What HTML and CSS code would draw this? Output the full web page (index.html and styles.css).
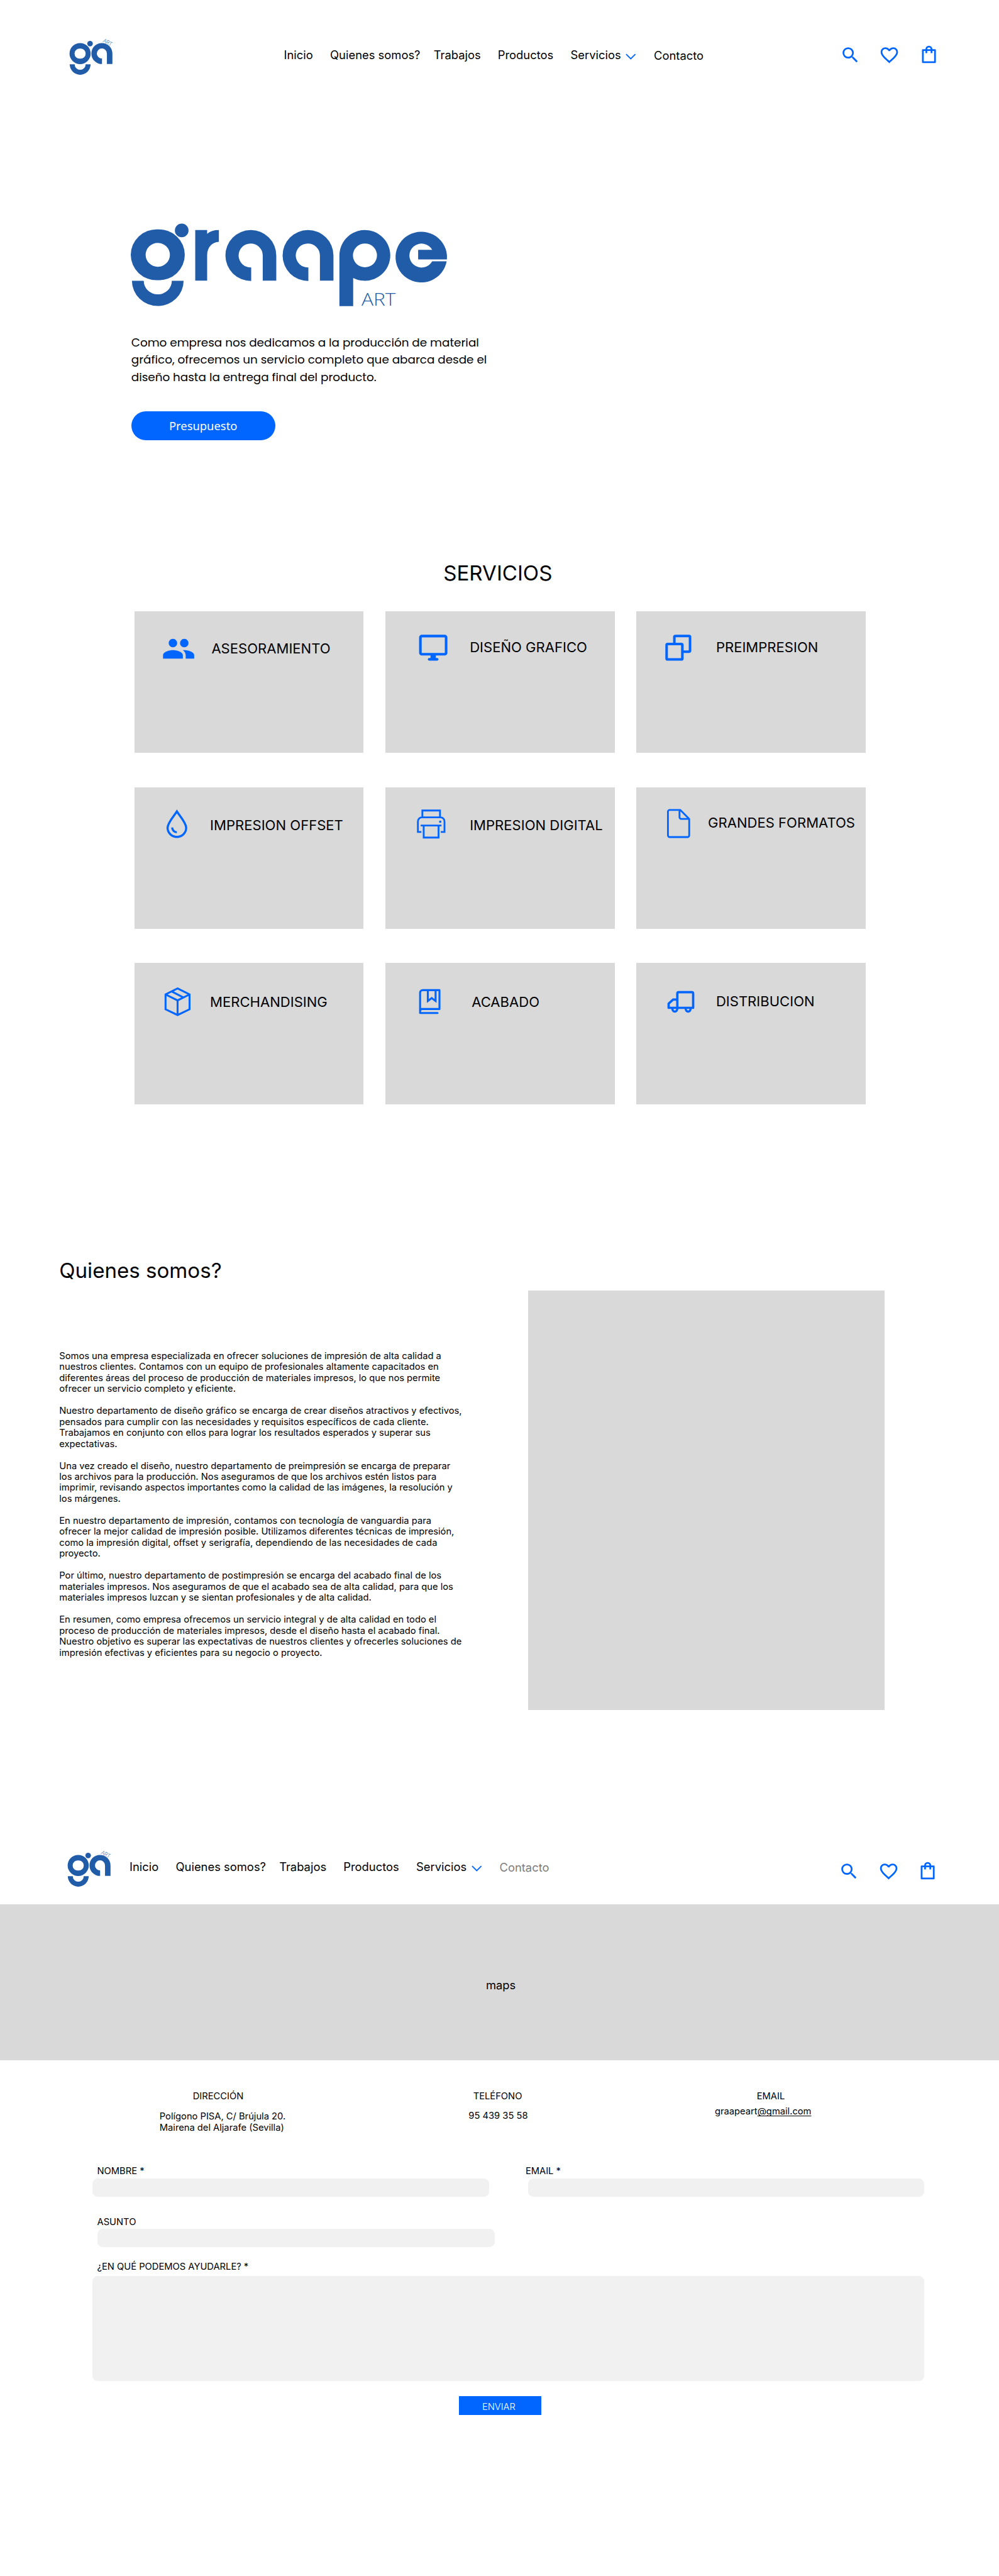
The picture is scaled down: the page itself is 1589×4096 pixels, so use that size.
FILE: index.html
```html
<!DOCTYPE html>
<html lang="es">
<head>
<meta charset="utf-8">
<title>Graape Art</title>
<link rel="stylesheet" href="styles.css">
</head>
<body>
<svg width="0" height="0" class="sprite" aria-hidden="true">
  <symbol id="logo" viewBox="118 62 80 70">
    <g fill="#215ca9">
      <path fill-rule="evenodd" d="M138 74.4a18.2 18.2 0 1 0 0 36.5a18.2 18.2 0 1 0 0-36.5zM138 84a8.7 8.7 0 1 1 0 17.3a8.7 8.7 0 1 1 0-17.3z"/>
      <circle cx="155.2" cy="75.4" r="4.8"/>
      <path d="M120 111.2H128.6A9.5 9.5 0 0 0 147.6 111.2H156.2A18.1 18.1 0 0 1 120 111.2Z"/>
      <path d="M175.9 101.2A8.7 8.7 0 1 1 184.4 92.6V110.8H193.9V92.6A18.2 18.2 0 1 0 175.9 110.8Z"/>
      <text transform="translate(176.6 72.6) rotate(27)" class="logo-art" font-size="10" textLength="16.5">ART</text>
    </g>
  </symbol>
  <symbol id="search" viewBox="0 0 24 24"><path d="M15.5 14h-.79l-.28-.27A6.47 6.47 0 0 0 16 9.5 6.5 6.5 0 1 0 9.5 16c1.61 0 3.09-.59 4.23-1.57l.27.28v.79l5 4.99L20.49 19l-4.99-5zm-6 0C7.01 14 5 11.99 5 9.5S7.01 5 9.5 5 14 7.01 14 9.5 11.99 14 9.5 14z"/></symbol>
  <symbol id="heart" viewBox="0 0 24 24"><path d="M16.5 3c-1.74 0-3.41.81-4.5 2.09C10.91 3.81 9.24 3 7.5 3 4.42 3 2 5.42 2 8.5c0 3.78 3.4 6.86 8.55 11.54L12 21.35l1.45-1.32C18.6 15.36 22 12.28 22 8.5 22 5.42 19.58 3 16.5 3zm-4.4 15.55l-.1.1-.1-.1C7.14 14.24 4 11.39 4 8.5 4 6.5 5.5 5 7.5 5c1.54 0 3.04.99 3.57 2.36h1.87C13.46 5.99 14.96 5 16.5 5c2 0 3.5 1.5 3.5 3.5 0 2.89-3.14 5.74-7.9 10.05z"/></symbol>
  <symbol id="bag" viewBox="0 0 24 24"><path fill="none" stroke="currentColor" stroke-width="2" stroke-linejoin="round" d="M5 6.2H19V20.3H5ZM9 9.8V5.2a3 3 0 0 1 6 0V9.8"/></symbol>
</svg>

<header class="header">
  <svg class="logo"><use href="#logo"/></svg>
  <nav class="nav">
    <a>Inicio</a><a>Quienes somos?</a><a>Trabajos</a><a>Productos</a>
    <a class="with-arrow">Servicios <svg class="arrow" viewBox="0 0 18 11"><path d="M1 1.2L9 9.2L17 1.2"/></svg></a>
    <a class="low">Contacto</a>
  </nav>
  <div class="actions">
    <svg><use href="#search"/></svg><svg><use href="#heart"/></svg><svg><use href="#bag"/></svg>
  </div>
</header>

<section class="hero">
  <svg class="wordmark" viewBox="227 386 548 145">
    <g fill="#215ca9">
      <path fill-rule="evenodd" d="M272.6 396.7a44.6 43.9 0 1 0 0 87.7a44.6 43.9 0 1 0 0-87.7zM272.6 420a21 20.6 0 1 1 0 41.2a21 20.6 0 1 1 0-41.2z"/>
      <circle cx="314" cy="398.4" r="12.6" stroke="#fff" stroke-width="1.6"/>
      <path d="M227.9 485.4H248.3A24.3 23.6 0 0 0 296.9 485.4H317.3A44.7 43.7 0 0 1 227.9 485.4Z"/>
      <path d="M337.4 397.8H358V404.2C363.5 399.8 370 397.7 378.3 397.8V418C367 418.5 358 427.5 358 441V485.2H337.4Z"/>
      <path id="letter-a" d="M434.2 462.4A20.9 20.7 0 1 1 454.2 441.7V485.2H477.6V441.7A44 44 0 1 0 434.2 485.7Z"/>
      <use href="#letter-a" x="98.9"/>
      <path fill-rule="evenodd" d="M586.8 441.5A44 43.8 0 1 1 610.6 480.5V529.3H586.8ZM631 421a20.8 20.6 0 1 0 0 41.2a20.8 20.6 0 1 0 0-41.2z"/>
      <path d="M772.8 448.4H723V432H747.3A21 20.7 0 1 0 747.3 451.7H772.3A44.5 43.8 0 1 1 772.8 441.5Z"/>
      <text x="625" y="529" class="logo-art" font-size="30.4" textLength="59" lengthAdjust="spacingAndGlyphs">ART</text>
    </g>
  </svg>
  <p class="lead">Como empresa nos dedicamos a la producción de material<br>gráfico, ofrecemos un servicio completo que abarca desde el<br>diseño hasta la entrega final del producto.</p>
  <a class="cta">Presupuesto</a>
</section>

<section class="services">
  <h2>SERVICIOS</h2>
  <div class="cards">
    <article class="card">
      <svg class="icon solid" viewBox="273 1087 80 60"><path transform="translate(279.6 1091.9) scale(2.45)" d="M16 11c1.66 0 2.99-1.34 2.99-3S17.66 5 16 5c-1.66 0-3 1.34-3 3s1.34 3 3 3zm-8 0c1.66 0 2.99-1.34 2.99-3S9.66 5 8 5C6.34 5 5 6.34 5 8s1.34 3 3 3zm0 2c-2.33 0-7 1.17-7 3.5V19h14v-2.5c0-2.33-4.67-3.5-7-3.5zm8 0c-.29 0-.62.02-.97.05 1.16.84 1.97 1.97 1.97 3.45V19h6v-2.5c0-2.33-4.67-3.5-7-3.5z"/></svg>
      <h3>ASESORAMIENTO</h3>
    </article>
    <article class="card">
      <svg class="icon" viewBox="707 1087 80 60" stroke-width="4.5"><rect x="727.3" y="1099.3" width="44.5" height="31.5" rx="2.4"/><path stroke-width="9.2" d="M749.4 1132V1139"/><path stroke-linecap="round" d="M742.5 1139.6H756.3"/></svg>
      <h3>DISEÑO GRAFICO</h3>
    </article>
    <article class="card">
      <svg class="icon" viewBox="1141 1087 80 60" stroke-width="4.4"><rect x="1153.3" y="1113" width="27.2" height="26.8" rx="1.8"/><path d="M1166.7 1113V1101a1.8 1.8 0 0 1 1.8-1.8H1192a1.8 1.8 0 0 1 1.8 1.8V1124.7a1.8 1.8 0 0 1-1.8 1.8H1181"/></svg>
      <h3>PREIMPRESION</h3>
    </article>
    <article class="card">
      <svg class="icon" viewBox="273 1391 80 60" stroke-width="3.7"><path d="M306 1403.2C301 1411 289.9 1423 289.9 1431.5A16.1 15.8 0 0 0 322.1 1431.5C322.1 1423 311 1411 306 1403.2Z"/><path d="M297.9 1431A8.4 8.4 0 0 0 305.9 1439.3"/></svg>
      <h3>IMPRESION OFFSET</h3>
    </article>
    <article class="card">
      <svg class="icon" viewBox="707 1391 80 60" stroke-width="3.1"><path d="M730.7 1413.5V1401.6H761.2V1413.5M729 1438.7H723V1420.5a7 7 0 0 1 7-7H762a7 7 0 0 1 7 7V1438.7H762.5M727.8 1427.5H763.8M733 1427.5V1448.4H758.7V1427.5"/><path stroke-width="3.6" d="M759.8 1421H763.4"/></svg>
      <h3>IMPRESION DIGITAL</h3>
    </article>
    <article class="card">
      <svg class="icon" viewBox="1141 1391 80 60" stroke-width="3.1" stroke-linejoin="round"><path d="M1176.8 1400.6H1158.6a3 3 0 0 0-3 3V1444.6a3 3 0 0 0 3 3H1189.4a3 3 0 0 0 3-3V1416.2ZM1175.6 1401V1413.2a3 3 0 0 0 3 3H1192"/></svg>
      <h3>GRANDES FORMATOS</h3>
    </article>
    <article class="card">
      <svg class="icon" viewBox="273 1695 80 60" stroke-width="3.3"><path d="M307.2 1708.8L327.9 1719.2V1744.8L307.2 1754.8L286.4 1744.8V1719.2ZM286.4 1719.2L307.2 1729.5L327.9 1719.2M307.2 1729.5V1754.5M296.8 1714L317.5 1724.5"/></svg>
      <h3>MERCHANDISING</h3>
    </article>
    <article class="card">
      <svg class="icon" viewBox="707 1695 80 60" stroke-width="3.4" stroke-linejoin="round"><path d="M726.8 1751.3V1716a4.3 4.3 0 0 1 4.3-4.3H760.3V1744.4H730.5a3.7 3.7 0 0 0-3.7 3.7M726.8 1744.4H731M726.8 1751.3H757" stroke-linecap="round"/><path stroke-linejoin="miter" d="M740.2 1712V1730.5L746.9 1725.5L753.6 1730.5V1712"/></svg>
      <h3>ACABADO</h3>
    </article>
    <article class="card">
      <svg class="icon" viewBox="1141 1695 80 60" stroke-width="4"><path stroke-linejoin="round" d="M1171.8 1742.3V1717.5a2.3 2.3 0 0 1 2.3-2.3H1196.9a2.3 2.3 0 0 1 2.3 2.3V1742.3H1156.8V1735L1164.5 1728H1171.8"/><path stroke-width="3.8" d="M1163.2 1743.5a4.3 5.3 0 0 0 8.6 0M1186.2 1743.5a4.3 5.3 0 0 0 8.6 0"/></svg>
      <h3>DISTRIBUCION</h3>
    </article>
  </div>
</section>

<section class="about">
  <div class="about-text">
    <h2>Quienes somos?</h2>
    <p>Somos una empresa especializada en ofrecer soluciones de impresión de alta calidad a<br>nuestros clientes. Contamos con un equipo de profesionales altamente capacitados en<br>diferentes áreas del proceso de producción de materiales impresos, lo que nos permite<br>ofrecer un servicio completo y eficiente.</p>
    <p>Nuestro departamento de diseño gráfico se encarga de crear diseños atractivos y efectivos,<br>pensados para cumplir con las necesidades y requisitos específicos de cada cliente.<br>Trabajamos en conjunto con ellos para lograr los resultados esperados y superar sus<br>expectativas.</p>
    <p>Una vez creado el diseño, nuestro departamento de preimpresión se encarga de preparar<br>los archivos para la producción. Nos aseguramos de que los archivos estén listos para<br>imprimir, revisando aspectos importantes como la calidad de las imágenes, la resolución y<br>los márgenes.</p>
    <p>En nuestro departamento de impresión, contamos con tecnología de vanguardia para<br>ofrecer la mejor calidad de impresión posible. Utilizamos diferentes técnicas de impresión,<br>como la impresión digital, offset y serigrafía, dependiendo de las necesidades de cada<br>proyecto.</p>
    <p>Por último, nuestro departamento de postimpresión se encarga del acabado final de los<br>materiales impresos. Nos aseguramos de que el acabado sea de alta calidad, para que los<br>materiales impresos luzcan y se sientan profesionales y de alta calidad.</p>
    <p>En resumen, como empresa ofrecemos un servicio integral y de alta calidad en todo el<br>proceso de producción de materiales impresos, desde el diseño hasta el acabado final.<br>Nuestro objetivo es superar las expectativas de nuestros clientes y ofrecerles soluciones de<br>impresión efectivas y eficientes para su negocio o proyecto.</p>
  </div>
  <div class="about-image"></div>
</section>

<header class="header header-contact">
  <svg class="logo"><use href="#logo"/></svg>
  <nav class="nav">
    <a>Inicio</a><a>Quienes somos?</a><a>Trabajos</a><a>Productos</a>
    <a class="with-arrow">Servicios <svg class="arrow" viewBox="0 0 18 11"><path d="M1 1.2L9 9.2L17 1.2"/></svg></a>
    <a class="low current">Contacto</a>
  </nav>
  <div class="actions">
    <svg><use href="#search"/></svg><svg><use href="#heart"/></svg><svg><use href="#bag"/></svg>
  </div>
</header>

<div class="map">maps</div>

<section class="info">
  <div class="address"><h4>DIRECCIÓN</h4><p>Polígono PISA, C/ Brújula 20.<br>Mairena del Aljarafe (Sevilla)</p></div>
  <div class="phone"><h4>TELÉFONO</h4><p>95 439 35 58</p></div>
  <div class="mail"><h4>EMAIL</h4><p>graapeart<u>@gmail.com</u></p></div>
</section>

<form class="form">
  <div class="row">
    <div class="field name"><label>NOMBRE *</label><div class="input"></div></div>
    <div class="field email"><label>EMAIL *</label><div class="input"></div></div>
  </div>
  <div class="field subject"><label>ASUNTO</label><div class="input"></div></div>
  <div class="field message"><label>¿EN QUÉ PODEMOS AYUDARLE? *</label><div class="input area"></div></div>
  <div class="send">ENVIAR</div>
</form>
</body>
</html>
```
FILE: styles.css
```css
/* 1rem is ten design pixels */
html { font-size: 9.196px; }
* { box-sizing: border-box; }
body {
  margin: 0;
  width: 172.8rem;
  height: 4096px;
  overflow: hidden;
  background: #fff;
  color: #000;
  font-family: Inter, "Liberation Sans", sans-serif;
  font-size: 1.6rem;
  line-height: 1.9rem;
}
h2, h3, h4, p { margin: 0; font-weight: 400; }
svg { display: block; }
symbol, .logo, .wordmark { overflow: visible; }
.sprite { position: absolute; }
.logo-art { font-family: "Open Sans", sans-serif; font-weight: 300; }

/* header */
.header { display: flex; align-items: flex-start; height: 16rem; padding: 6.2rem 10.3rem 0 11.8rem; }
.logo { width: 8rem; height: 7rem; flex: none; }
.nav {
  display: grid;
  grid-template-columns: 8rem 17.9rem 11.1rem 12.6rem 14.4rem auto;
  margin: 2.07rem 0 0 29.3rem;
  font-size: 2rem;
  line-height: 2.4rem;
  white-space: nowrap;
}
.with-arrow { display: flex; }
.arrow { width: 1.8rem; height: 1.1rem; margin: .95rem 0 0 .8rem; fill: none; stroke: #06f; stroke-width: 2; }
.low { padding-top: .1rem; }
.current { color: #7d7d7d; }
.actions { display: flex; gap: 3.24rem; margin: 1.5rem 0 0 auto; color: #06f; fill: #06f; }
.actions svg { width: 3.6rem; height: 3.6rem; }
.header-contact { height: 15.91rem; padding: 6.2rem 10.5rem 0 11.53rem; }
.header-contact .nav { margin: 2.03rem 0 0 2.87rem; }
.header-contact .actions { margin-top: 2.21rem; }

/* hero */
.hero { height: 80.89rem; padding: 22.6rem 0 0 22.7rem; }
.wordmark { width: 54.8rem; height: 14.5rem; }
.lead {
  margin-top: 4.6rem;
  font-family: Poppins, Inter, sans-serif;
  font-feature-settings: "cv11";
  font-size: 2rem;
  line-height: 3rem;
  white-space: nowrap;
}
.cta {
  display: block;
  width: 24.9rem;
  height: 5rem;
  margin-top: 4.4rem;
  padding-left: 6.55rem;
  border-radius: 2.5rem;
  background: #06f;
  color: #fff;
  font-family: "Noto Sans", sans-serif;
  font-size: 2rem;
  line-height: 4.9rem;
}

/* services */
.services { padding: 0 23.1rem 26.47rem 23.3rem; }
.services h2 { padding-right: .8rem; font-size: 3.6rem; line-height: 4.4rem; text-align: center; }
.cards { display: grid; grid-template-columns: repeat(3, 39.6rem); gap: 5.9rem 3.8rem; margin-top: 4.41rem; }
.card { display: flex; align-items: flex-start; height: 24.5rem; padding: 3rem 0 0 4rem; background: #d9d9d9; }
.icon { width: 8rem; height: 6rem; flex: none; overflow: visible; fill: none; stroke: #06f; }
.icon.solid { fill: #06f; stroke: none; }
.card h3 { margin: 1.78rem 0 0 1.75rem; font-size: 2.4rem; line-height: 2.9rem; white-space: nowrap; }
.card:nth-child(1) h3 { margin: 1.98rem 0 0 1.28rem; }
.card:nth-child(2) h3 { margin-left: 2.55rem; }
.card:nth-child(4) h3 { margin: 2.18rem 0 0 1.03rem; }
.card:nth-child(5) h3 { margin: 2.18rem 0 0 2.55rem; }
.card:nth-child(6) h3 { margin-left: .35rem; }
.card:nth-child(7) h3 { margin: 2.28rem 0 0 1.03rem; }
.card:nth-child(8) h3 { margin: 2.28rem 0 0 2.88rem; }
.card:nth-child(9) h3 { margin-top: 2.18rem; }

/* about */
.about { display: flex; align-items: flex-start; height: 95.87rem; padding-left: 10.25rem; }
.about-text { width: 81.05rem; white-space: nowrap; }
.about h2 { margin-bottom: 11.7rem; font-size: 3.6rem; line-height: 4.4rem; }
.about p + p { margin-top: 1.9rem; }
.about-image { width: 61.7rem; height: 72.5rem; margin-top: 5.73rem; background: #d9d9d9; }

/* contact */
.map { height: 27rem; padding: 12.8rem 0 0 84.05rem; background: #d9d9d9; font-size: 2rem; line-height: 2.4rem; }
.info { display: grid; grid-template-columns: 53.45rem 42.6rem auto; height: 18.2rem; padding: 5.32rem 0 0 27.6rem; }
.address h4 { margin: 0 0 1.6rem 5.75rem; }
.phone h4 { margin: 0 0 1.47rem .8rem; }
.mail h4 { margin: 0 0 .67rem 7.25rem; }
.mail u { text-underline-offset: .25rem; text-decoration-skip-ink: none; }
.form { padding: 0 12.9rem 0 16rem; }
.row { display: flex; gap: 6.7rem; }
.field { width: 68.6rem; }
.field label { display: block; padding-left: .8rem; transform: translateY(.07rem); }
.input { height: 3.15rem; margin-top: .35rem; border-radius: .9rem; background: #f1f1f1; }
.email label { padding: 0; margin-left: -.4rem; }
.subject { width: 69.6rem; margin-top: 3.38rem; padding-left: .9rem; }
.subject label { padding: 0; margin-left: -.1rem; }
.subject .input { margin-top: .27rem; }
.message { width: 143.9rem; margin-top: 2.39rem; }
.area { height: 18.2rem; margin-top: .69rem; }
.send { width: 14.2rem; height: 3.27rem; margin: 2.57rem 0 0 63.4rem; padding: .97rem 0 0 4rem; background: #06f; color: #fff; font-weight: 300; }
```
